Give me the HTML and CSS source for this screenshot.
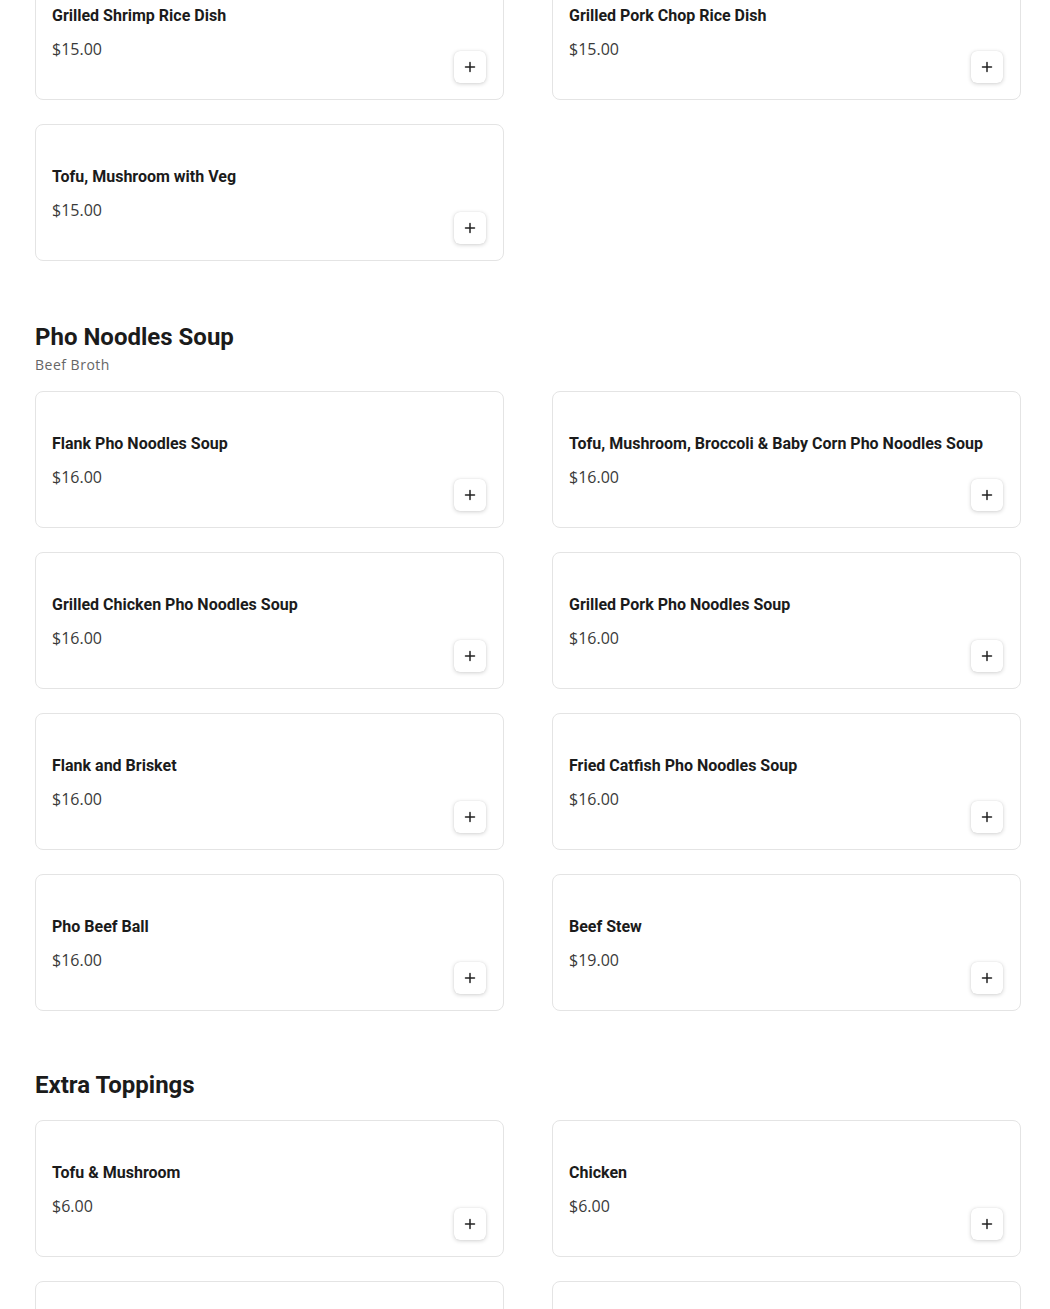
FILE: index.html
```html
<!DOCTYPE html>
<html lang="en">
<head>
<meta charset="utf-8">
<title>Menu</title>
<link rel="stylesheet" href="styles.css">
</head>
<body>
<main class="menu">
  <section class="section section-first">
    <div class="grid">
      <div class="card"><div class="info"><div class="name">Grilled Shrimp Rice Dish</div><div class="price">$15.00</div></div><button class="add" aria-label="Add"><svg viewBox="0 0 12 12" width="12" height="12"><path d="M6 1.5v9M1.5 6h9" stroke="#222" stroke-width="1.5" stroke-linecap="round" fill="none"/></svg></button></div>
      <div class="card"><div class="info"><div class="name">Grilled Pork Chop Rice Dish</div><div class="price">$15.00</div></div><button class="add" aria-label="Add"><svg viewBox="0 0 12 12" width="12" height="12"><path d="M6 1.5v9M1.5 6h9" stroke="#222" stroke-width="1.5" stroke-linecap="round" fill="none"/></svg></button></div>
      <div class="card"><div class="info"><div class="name">Tofu, Mushroom with Veg</div><div class="price">$15.00</div></div><button class="add" aria-label="Add"><svg viewBox="0 0 12 12" width="12" height="12"><path d="M6 1.5v9M1.5 6h9" stroke="#222" stroke-width="1.5" stroke-linecap="round" fill="none"/></svg></button></div>
    </div>
  </section>

  <section class="section section-pho">
    <header class="section-head">
      <h2 class="section-title">Pho Noodles Soup</h2>
      <p class="section-sub">Beef Broth</p>
    </header>
    <div class="grid">
      <div class="card"><div class="info"><div class="name">Flank Pho Noodles Soup</div><div class="price">$16.00</div></div><button class="add" aria-label="Add"><svg viewBox="0 0 12 12" width="12" height="12"><path d="M6 1.5v9M1.5 6h9" stroke="#222" stroke-width="1.5" stroke-linecap="round" fill="none"/></svg></button></div>
      <div class="card"><div class="info"><div class="name">Tofu, Mushroom, Broccoli &amp; Baby Corn Pho Noodles Soup</div><div class="price">$16.00</div></div><button class="add" aria-label="Add"><svg viewBox="0 0 12 12" width="12" height="12"><path d="M6 1.5v9M1.5 6h9" stroke="#222" stroke-width="1.5" stroke-linecap="round" fill="none"/></svg></button></div>
      <div class="card"><div class="info"><div class="name">Grilled Chicken Pho Noodles Soup</div><div class="price">$16.00</div></div><button class="add" aria-label="Add"><svg viewBox="0 0 12 12" width="12" height="12"><path d="M6 1.5v9M1.5 6h9" stroke="#222" stroke-width="1.5" stroke-linecap="round" fill="none"/></svg></button></div>
      <div class="card"><div class="info"><div class="name">Grilled Pork Pho Noodles Soup</div><div class="price">$16.00</div></div><button class="add" aria-label="Add"><svg viewBox="0 0 12 12" width="12" height="12"><path d="M6 1.5v9M1.5 6h9" stroke="#222" stroke-width="1.5" stroke-linecap="round" fill="none"/></svg></button></div>
      <div class="card"><div class="info"><div class="name">Flank and Brisket</div><div class="price">$16.00</div></div><button class="add" aria-label="Add"><svg viewBox="0 0 12 12" width="12" height="12"><path d="M6 1.5v9M1.5 6h9" stroke="#222" stroke-width="1.5" stroke-linecap="round" fill="none"/></svg></button></div>
      <div class="card"><div class="info"><div class="name">Fried Catfish Pho Noodles Soup</div><div class="price">$16.00</div></div><button class="add" aria-label="Add"><svg viewBox="0 0 12 12" width="12" height="12"><path d="M6 1.5v9M1.5 6h9" stroke="#222" stroke-width="1.5" stroke-linecap="round" fill="none"/></svg></button></div>
      <div class="card"><div class="info"><div class="name">Pho Beef Ball</div><div class="price">$16.00</div></div><button class="add" aria-label="Add"><svg viewBox="0 0 12 12" width="12" height="12"><path d="M6 1.5v9M1.5 6h9" stroke="#222" stroke-width="1.5" stroke-linecap="round" fill="none"/></svg></button></div>
      <div class="card"><div class="info"><div class="name">Beef Stew</div><div class="price">$19.00</div></div><button class="add" aria-label="Add"><svg viewBox="0 0 12 12" width="12" height="12"><path d="M6 1.5v9M1.5 6h9" stroke="#222" stroke-width="1.5" stroke-linecap="round" fill="none"/></svg></button></div>
    </div>
  </section>

  <section class="section section-extra">
    <header class="section-head">
      <h2 class="section-title">Extra Toppings</h2>
    </header>
    <div class="grid">
      <div class="card"><div class="info"><div class="name">Tofu &amp; Mushroom</div><div class="price">$6.00</div></div><button class="add" aria-label="Add"><svg viewBox="0 0 12 12" width="12" height="12"><path d="M6 1.5v9M1.5 6h9" stroke="#222" stroke-width="1.5" stroke-linecap="round" fill="none"/></svg></button></div>
      <div class="card"><div class="info"><div class="name">Chicken</div><div class="price">$6.00</div></div><button class="add" aria-label="Add"><svg viewBox="0 0 12 12" width="12" height="12"><path d="M6 1.5v9M1.5 6h9" stroke="#222" stroke-width="1.5" stroke-linecap="round" fill="none"/></svg></button></div>
      <div class="card card-empty"><button class="add" aria-label="Add"><svg viewBox="0 0 12 12" width="12" height="12"><path d="M6 1.5v9M1.5 6h9" stroke="#222" stroke-width="1.5" stroke-linecap="round" fill="none"/></svg></button></div>
      <div class="card card-empty"><button class="add" aria-label="Add"><svg viewBox="0 0 12 12" width="12" height="12"><path d="M6 1.5v9M1.5 6h9" stroke="#222" stroke-width="1.5" stroke-linecap="round" fill="none"/></svg></button></div>
    </div>
  </section>
</main>
</body>
</html>
```

FILE: styles.css
```css
* { box-sizing: border-box; }

html, body {
  margin: 0;
  padding: 0;
  background: #ffffff;
}

body {
  font-family: Roboto, "Liberation Sans", sans-serif;
  color: #1b1b1b;
}

.menu {
  width: 986px;
  margin-left: 35px;
}

.section {
  margin-top: 59px;
}

.section-first {
  margin-top: -37px;
}

.section-pho {
  margin-top: 60px;
}

.section-extra {
  margin-top: 58px;
}

.section-head {
  margin-bottom: 18px;
}

.section-extra .section-head {
  margin-bottom: 19px;
}

.section-title {
  margin: 0;
  font-family: Roboto, "Liberation Sans", sans-serif;
  font-weight: 700;
  font-size: 24px;
  line-height: 32px;
  color: #1b1b1b;
}

.section-sub {
  margin: 4px 0 0;
  font-family: "Open Sans", "Noto Sans", sans-serif;
  font-size: 14px;
  line-height: 16px;
  letter-spacing: 0.5px;
  color: #666666;
}

.grid {
  display: grid;
  grid-template-columns: 1fr 1fr;
  column-gap: 48px;
  row-gap: 24px;
}

.card {
  height: 137px;
  border: 1px solid #e4e4e4;
  border-radius: 8px;
  padding: 16px;
  display: grid;
  grid-template-columns: 1fr;
  grid-template-rows: 1fr;
  background: #fff;
}

.info,
.add {
  grid-area: 1 / 1;
}

.info {
  padding-top: 24px;
  min-width: 0;
}

.name {
  font-family: Roboto, "Liberation Sans", sans-serif;
  font-weight: 700;
  font-size: 16px;
  line-height: 24px;
  color: #1b1b1b;
}

.price {
  margin-top: 9px;
  font-family: "Open Sans", "Noto Sans", sans-serif;
  font-size: 16px;
  line-height: 24px;
  color: #3a3a3a;
}

.add {
  align-self: end;
  justify-self: end;
  width: 32px;
  height: 32px;
  padding: 0;
  margin: 0 1px 0 0;
  border: none;
  border-radius: 6px;
  background: #fff;
  box-shadow: 0 1px 4px rgba(0, 0, 0, 0.18), 0 0 1px rgba(0, 0, 0, 0.12);
  display: flex;
  align-items: center;
  justify-content: center;
  cursor: pointer;
}

.add svg { display: block; }
```
